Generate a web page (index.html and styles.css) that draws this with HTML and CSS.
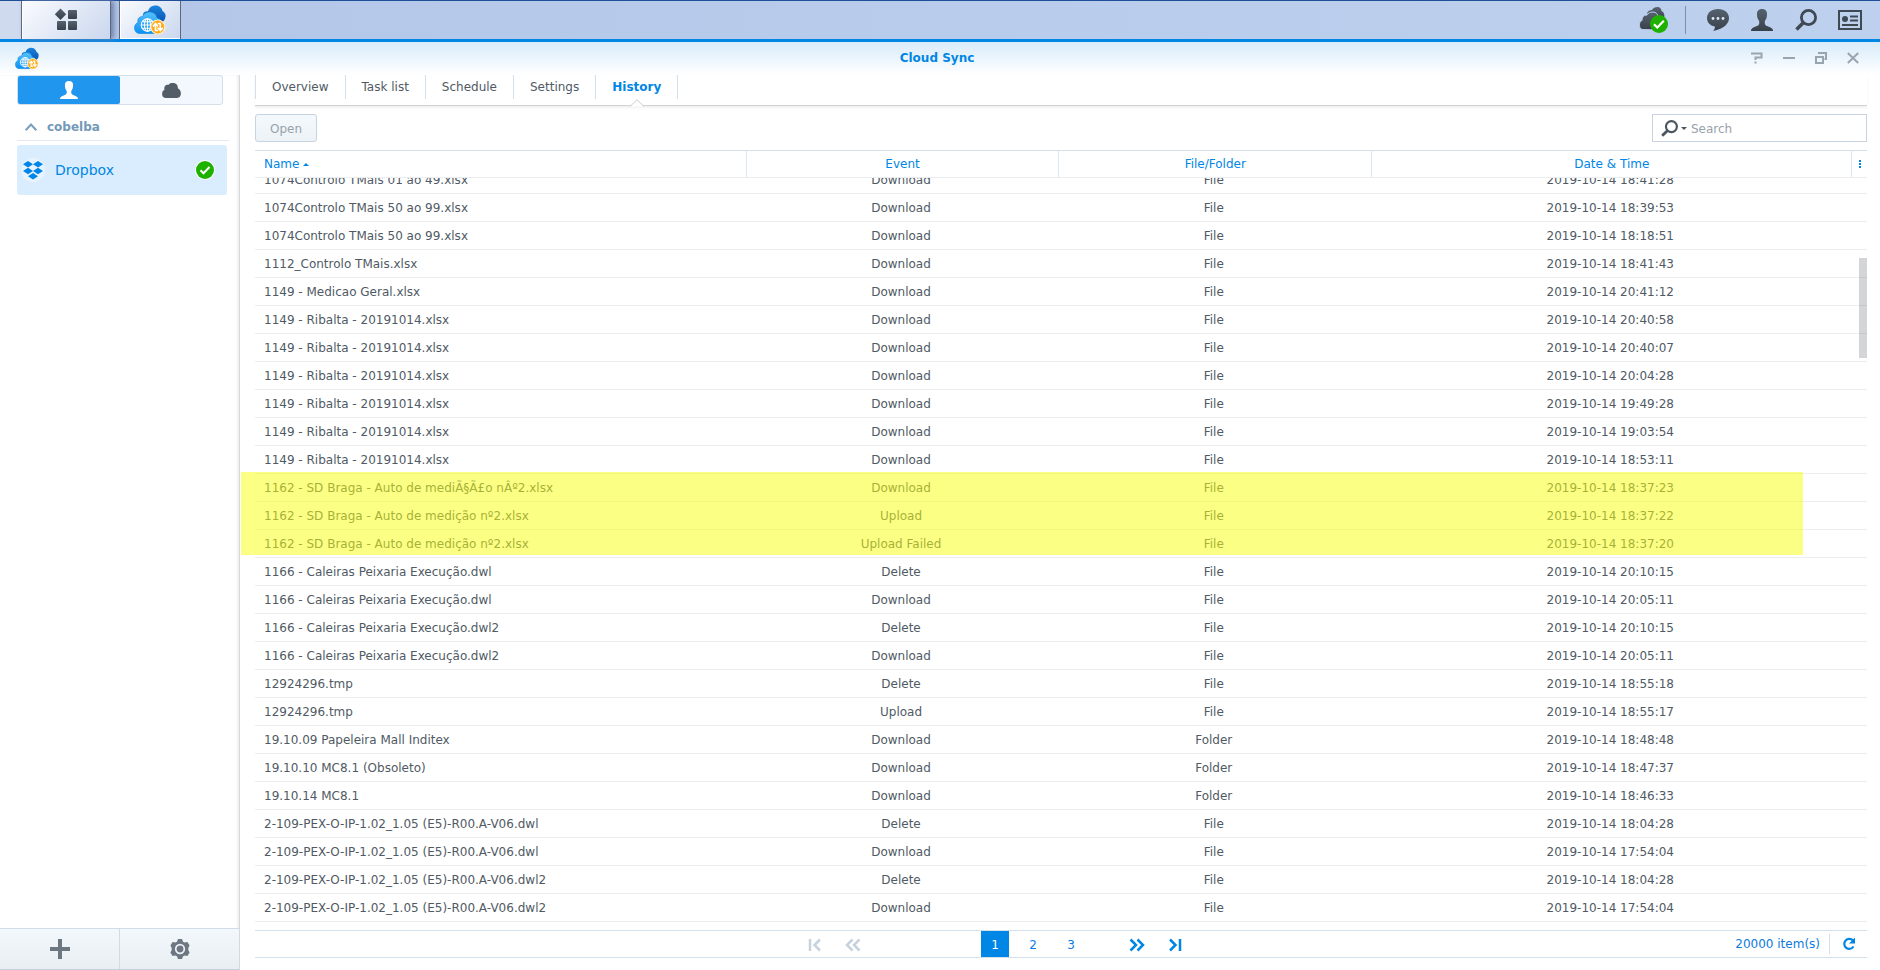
FILE: index.html
```html
<!DOCTYPE html>
<html lang="en">
<head>
<meta charset="utf-8">
<title>Cloud Sync</title>
<link rel="stylesheet" href="styles.css">
</head>
<body>
<svg class="defs" aria-hidden="true">
  <defs>
    <linearGradient id="g-back" x1="0" y1="0" x2="0" y2="1"><stop offset="0" stop-color="#1a86dd"/><stop offset="1" stop-color="#0a52b0"/></linearGradient>
    <linearGradient id="g-front" x1="0" y1="0" x2="0" y2="1"><stop offset="0" stop-color="#55c0fb"/><stop offset="1" stop-color="#0a92f5"/></linearGradient>
    <linearGradient id="g-dark" x1="0" y1="0" x2="0" y2="1"><stop offset="0" stop-color="#56626f"/><stop offset="1" stop-color="#37404a"/></linearGradient>
    <symbol id="cloudsync" viewBox="0 0 32 30">
      <path fill="url(#g-back)" d="M9 9c1-2 3-3 5-2.500C15 2.500 18 .5 21.500.5c4 0 6.500 2.500 7 5.500C31 7.500 32 9.500 31.500 12c-.3 3-2.500 5-5 5.500L12 16z"/>
      <path fill="url(#g-front)" stroke="#1182dc" stroke-width=".6" d="M5 28.500c-3-.5-4.700-3-4.500-6C.7 20 2 18.500 4 17.500c-1-3 1-6 4.500-6C9.500 8.500 12 7 15.500 7c4 0 7 2.500 7.500 6 3 .5 5 3 5 6.500 0 5-2 9-6 9z"/>
      <g fill="none" stroke="#fff" stroke-width="1.100"><circle cx="13.500" cy="20" r="6.300"/><ellipse cx="13.500" cy="20" rx="3" ry="6.300"/><path d="M13.500 13.700v12.600M7.200 20h12.600M8.200 16.800h10.600M8.200 23.200h10.600"/></g>
      <circle cx="23.800" cy="22" r="7" fill="#ffa914" stroke="#fff0c5" stroke-width="1.200"/>
      <path fill="none" stroke="#fff" stroke-width="1.700" d="M24 25.500h-2.500V19M19 21.300l2.500-2.700 2.500 2.700M23.800 18.500h2.500V25M23.800 22.800l2.500 2.700 2.500-2.700"/>
    </symbol>
    <symbol id="user" viewBox="0 0 22 22"><path d="M11 0c3.800 0 5.200 2.300 5 5.700-.1 2.800-1 4.800-2.200 6.300v3c1 2.300 4.700 2.500 7.200 4.500.8.7 1 1.600 1 2.500H0c0-.9.200-1.800 1-2.500 2.500-2 6.200-2.200 7.200-4.500v-3C7 10.500 6.100 8.500 6 5.700 5.800 2.300 7.200 0 11 0z"/></symbol>
    <symbol id="cloud" viewBox="0 0 20 16"><path d="M3.500 16C1 15.800 0 14 0 11.800 0 9.500.8 8 2.500 7.300 1.800 4 3.500 1.800 6.500 2 8 .3 9.500 0 11.500 0 14.500 0 17 2 16.800 5.500c2.200 1.300 3.200 3 3.200 5.500 0 3-1.500 5-4 5z"/></symbol>
    <symbol id="check" viewBox="0 0 18 18"><circle cx="9" cy="9" r="9" fill="#1eb100"/><path d="M4.500 9.200l3 3L13.500 6" fill="none" stroke="#fff" stroke-width="2"/></symbol>
    <symbol id="lens" viewBox="0 0 22 22"><circle cx="13.500" cy="8.500" r="7.100" fill="none" stroke="currentColor" stroke-width="2.800"/><path d="M8.500 13.500L1.500 20.500" fill="none" stroke="currentColor" stroke-width="3.600"/></symbol>
  </defs>
</svg>

<header class="taskbar">
  <div class="taskbar-edge"></div>
  <button class="task task-menu" aria-label="Main menu">
    <svg width="22" height="22" viewBox="0 0 22 22" fill="url(#g-dark)"><path d="M5.500-.5l5.700 5.700-5.700 5.700L-.2 5.200z"/><rect x="13" y="1" width="9" height="9" rx="1"/><rect x="2" y="12" width="9" height="9" rx="1"/><rect x="13" y="12" width="9" height="9" rx="1"/></svg>
  </button>
  <button class="task task-app" aria-label="Cloud Sync"><svg width="32" height="30"><use href="#cloudsync"/></svg></button>
  <div class="tray">
    <button class="tray-btn tray-status" aria-label="Sync status">
      <svg width="30" height="26" viewBox="0 0 30 26"><g fill="url(#g-dark)"><path d="M8 6c1-2 3-3 5-3 1-2 3-3 5.500-3C21 0 22 1.500 22.500 4c2.500 1 3.500 4 2.500 8l-8 3z"/><path stroke="#b9cde9" d="M3 22.500c-2-1-3-3-2.500-5.500C.8 15 1.500 14 3 13.500 3 10 4.500 8 8 8c1-2 3-3 6-3 3 0 5 2 5 5 3 1 4 3 4 7v6z"/></g><circle cx="20" cy="17" r="9" fill="#1eb100"/><path d="M15 17.200l3.300 3.300 6.500-6.800" fill="none" stroke="#fff" stroke-width="2.200"/></svg>
    </button>
    <button class="tray-btn" aria-label="Notifications"><svg width="22" height="22" viewBox="0 0 22 22"><path fill="url(#g-dark)" d="M11 0c6.500 0 11 3.800 11 9 0 5.500-4.500 10.500-16 13 1.500-1.500 2-3 1.800-4.500C3 16.500 0 13.500 0 9c0-5.200 4.500-9 11-9z"/><g fill="#dfe8f5"><circle cx="6" cy="9.500" r="1.400"/><circle cx="11" cy="9.500" r="1.400"/><circle cx="16" cy="9.500" r="1.400"/></g></svg></button>
    <button class="tray-btn" aria-label="User"><svg width="22" height="22" fill="url(#g-dark)"><use href="#user"/></svg></button>
    <button class="tray-btn" aria-label="Search"><svg width="22" height="22"><use href="#lens"/></svg></button>
    <button class="tray-btn" aria-label="Widgets"><svg width="24" height="20" viewBox="0 0 24 20"><path fill="none" stroke="currentColor" stroke-width="2" d="M1 1h22v18H1z"/><path fill="none" stroke="currentColor" stroke-width="2" d="M12 6.500h8M12 10.500h8M4 15h16"/><circle cx="7" cy="9" r="3" fill="currentColor"/></svg></button>
  </div>
</header>

<div class="window">
  <div class="titlebar">
    <svg class="title-icon" width="24" height="23"><use href="#cloudsync"/></svg>
    <h1 class="title">Cloud Sync</h1>
    <div class="controls">
      <button aria-label="Help"><svg width="12" height="12" viewBox="0 0 12 12"><path d="M0 1.500h10.500v4H4.500V8M4.500 9.500v2"/></svg></button>
      <button aria-label="Minimize"><svg width="12" height="12" viewBox="0 0 12 12"><path d="M0 6h12"/></svg></button>
      <button aria-label="Restore"><svg width="12" height="12" viewBox="0 0 12 12"><path d="M3 1h8v6H9.500M1 5h7v6H1zM0 5h9"/></svg></button>
      <button aria-label="Close"><svg width="12" height="12" viewBox="0 0 12 12"><path d="M.8 1l10.400 10M11.200 1L.8 11"/></svg></button>
    </div>
  </div>

  <div class="content">
    <aside class="sidebar">
      <div class="switch">
        <button class="switch-btn on" aria-label="By user"><svg width="18" height="18" fill="#fff"><use href="#user"/></svg></button>
        <button class="switch-btn" aria-label="By cloud"><svg width="19" height="15" fill="#525d68"><use href="#cloud"/></svg></button>
      </div>
      <button class="group"><svg width="12" height="8" viewBox="0 0 12 8"><path d="M.7 7.200L6 1.500l5.300 5.700" fill="none" stroke="#7a9fbf" stroke-width="2"/></svg>cobelba</button>
      <button class="conn">
        <svg width="24" height="24" viewBox="0 0 24 24"><circle cx="12" cy="12" r="12" fill="#e8f3fd"/><g fill="#0085e8"><path d="M7 3l5 3.200-5 3.200-5-3.200zM17 3l5 3.200-5 3.200-5-3.200zM7 9.800l5 3.200-5 3.200L2 13zM17 9.800l5 3.200-5 3.200-5-3.200zM12 15l5 3.300-5 3.200-5-3.200z"/></g></svg>
        <span class="conn-name">Dropbox</span>
        <svg width="20" height="20" viewBox="-1 -1 20 20"><circle cx="9" cy="9" r="10" fill="#fff"/><use href="#check" width="18" height="18"/></svg>
      </button>
      <div class="side-tools">
        <button aria-label="Add"><svg width="20" height="20" viewBox="0 0 20 20"><path d="M10 0v20M0 10h20" stroke="#6c7782" stroke-width="4"/></svg></button>
        <button aria-label="Settings"><svg width="20" height="20" viewBox="0 0 20 20"><path fill="#6c7782" d="M8 0h4l1 2.700 1.700.9 2.700-.6 2.200 3.600L18.300 9v2l1.300 2.400-2.200 3.600-2.700-.6-1.700.9-1 2.700H8l-1-2.700-1.700-.9-2.700.6L.4 13.400 1.700 11V9L.4 6.600 2.600 3l2.700.6L7 2.700z"/><circle cx="10" cy="10" r="4.300" fill="#6c7782" stroke="#eef3f7" stroke-width="1.700"/></svg></button>
      </div>
    </aside>

    <main class="main">
      <nav class="tabs">
        <a href="#overview">Overview</a><a href="#tasks">Task list</a><a href="#schedule">Schedule</a><a href="#settings">Settings</a><a href="#history" class="active">History<svg class="notch" width="14" height="8" viewBox="0 0 14 8"><path d="M0 7.500L7 .7l7 6.800" fill="#fff" stroke="#ccc"/></svg></a>
      </nav>
      <div class="toolbar">
        <button class="open" disabled>Open</button>
        <label class="search">
          <svg width="17" height="17"><use href="#lens"/></svg>
          <svg width="6" height="3" viewBox="0 0 6 3"><path d="M0 0h6L3 3z" fill="currentColor"/></svg>
          <input type="text" placeholder="Search" aria-label="Search">
        </label>
      </div>
      <div class="grid">
        <div class="scroller" id="scroller">
          <table>
            <colgroup><col class="c-name"><col class="c-event"><col class="c-kind"><col class="c-date"><col></colgroup>
            <thead><tr><th class="name">Name <svg width="6" height="3" viewBox="0 0 6 3"><path d="M0 3h6L3 0z" fill="currentColor"/></svg></th><th>Event</th><th>File/Folder</th><th>Date &amp; Time</th><th class="more" aria-label="Columns"><svg width="2" height="8" viewBox="0 0 2 8"><path d="M1 0v8" stroke="currentColor" stroke-width="2" stroke-dasharray="2 1"/></svg></th></tr></thead>
            <tbody id="rows"></tbody>
          </table>
        </div>
        <div class="marker"></div>
        <div class="thumb"></div>
      </div>
      <footer class="pager">
        <div class="pages">
          <button disabled aria-label="First page"><svg width="12" height="12" viewBox="0 0 12 12"><path d="M1 0v12M11 .5L5.500 6l5.500 5.500"/></svg></button>
          <button disabled aria-label="Previous page"><svg width="14" height="12" viewBox="0 0 14 12"><path d="M6.500 .5L1 6l5.500 5.500M13.500 .5L8 6l5.500 5.500"/></svg></button>
          <div class="numbers"><button class="current">1</button><button>2</button><button>3</button></div>
          <button aria-label="Next page"><svg width="14" height="12" viewBox="0 0 14 12"><path d="M.5 .5L6 6 .5 11.500M7.500 .5L13 6l-5.500 5.500"/></svg></button>
          <button aria-label="Last page"><svg width="12" height="12" viewBox="0 0 12 12"><path d="M11 0v12M1 .5L6.500 6 1 11.500"/></svg></button>
        </div>
        <span class="count">20000 item(s)</span>
        <button class="refresh" aria-label="Refresh"><svg width="14" height="14" viewBox="0 0 14 14"><path d="M11 3.500A5 5 0 1 0 11.500 9.500" fill="none" stroke="currentColor" stroke-width="2.200"/><path d="M13 .5v6H7z" fill="currentColor"/></svg></button>
      </footer>
    </main>
  </div>
</div>
<script src="app.js"></script>
</body>
</html>
```
FILE: styles.css
```css
* { box-sizing: border-box; }
body {
  margin: 0;
  height: 100vh;
  display: flex;
  flex-direction: column;
  overflow: hidden;
  background: #fff;
  color: #505a64;
  font: 12px/16px Verdana, "DejaVu Sans", sans-serif;
}
button {
  display: flex;
  align-items: center;
  justify-content: center;
  margin: 0;
  padding: 0;
  border: 0;
  background: none;
  color: inherit;
  font: inherit;
  cursor: pointer;
}
svg { display: block; flex: none; overflow: visible; }
.defs { position: absolute; width: 0; height: 0; }

/* Taskbar */
.taskbar {
  flex: none;
  display: flex;
  height: 42px;
  border-top: 1px solid #1f4f96;
  border-bottom: 3px solid #0086e5;
  background: linear-gradient(90deg, #b4c6e8, #bdd1ee);
}
.taskbar-edge { width: 21px; background: #cfdaef; }
.task {
  border: 1px solid #5d6780;
  border-width: 0 1px;
  background: linear-gradient(135deg, #fafbfe, #cad7ee);
  box-shadow: inset 1px 0 #fff, inset 0 -1px #fff;
}
.task-menu { width: 90px; box-shadow: inset 1px 0 #fff, 3px 0 5px #7083ab; }
.task-app { width: 62px; margin-left: 8px; }
.tray { display: flex; align-items: center; margin-left: auto; padding-right: 8px; color: #3f4954; }
.tray-btn { width: 44px; height: 28px; }
.tray-status { width: 50px; margin-right: 10px; padding-right: 17px; padding-left: 4px; border-right: 1px solid #7c8eae; }

/* Window frame */
.window { flex: 1; min-height: 0; display: flex; flex-direction: column; }
.titlebar {
  flex: none;
  display: grid;
  grid-template-columns: 1fr auto 1fr;
  align-items: center;
  height: 33px;
  padding: 0 21px 1px 15px;
  background: linear-gradient(#d8ebfa, #fff);
}
.title { margin: 0; font-size: 12px; line-height: 16px; color: #0086e5; }
.controls { display: flex; justify-content: flex-end; gap: 20px; }
.controls path { fill: none; stroke: #98a5b1; stroke-width: 2; }
.content { flex: 1; min-height: 0; display: flex; }

/* Sidebar */
.sidebar {
  flex: none;
  display: flex;
  flex-direction: column;
  width: 240px;
  border-right: 1px solid #d5d9dd;
  box-shadow: inset -2px 0 2px #f0f0f0;
}
.switch { display: flex; margin: 0 16px 0 17px; height: 30px; border: 1px solid #d3dfea; border-radius: 3px; background: #f2f8fd; }
.switch-btn { flex: 1; }
.switch-btn.on { border-radius: 2px; background: #2196ef; }
.group {
  justify-content: flex-start;
  gap: 10px;
  height: 36px;
  margin: 0 10px 4px 17px;
  padding: 8px 8px 0;
  border-bottom: 1px solid #e3e9ef;
  color: #7399b9;
  font-weight: bold;
}
.conn { gap: 10px; height: 50px; margin: 0 12px 0 17px; padding: 0 12px 0 4px; border-radius: 3px; background: #d9edff; color: #0086e5; font-size: 14px; }
.conn-name { flex: 1; text-align: left; }
.side-tools { display: flex; height: 42px; margin-top: auto; border: 1px solid #d0dbe6; border-width: 1px 0; border-bottom-color: #c4cfd9; background: linear-gradient(#f3f8fd, #e9eef3); }
.side-tools button { flex: 1; }
.side-tools button + button { border-left: 1px solid #d0dbe6; }

/* Main panel */
.main { flex: 1; min-width: 0; display: flex; flex-direction: column; padding: 0 13px 12px 15px; }
.tabs { flex: none; display: flex; height: 31px; padding-bottom: 6px; border-bottom: 1px solid #d0d3d6; box-shadow: 0 2px 2px #f2f2f2; }
.tabs a { position: relative; padding: 4px 16px 0; border-left: 1px solid #d3e0ec; color: inherit; text-decoration: none; }
.tabs .active { border-right: 1px solid #d3e0ec; color: #0086e5; font-weight: bold; }
.notch { position: absolute; left: 50%; bottom: -8px; margin-left: -7px; }
.toolbar { flex: none; display: flex; justify-content: space-between; padding: 8px 0; }
.open { width: 62px; height: 28px; padding-top: 2px; border: 1px solid #c6d3e0; border-radius: 3px; background: linear-gradient(#f4f9fd, #edf2f7); color: #98a2ab; }
.search { display: flex; align-items: center; width: 215px; height: 28px; padding-left: 8px; border: 1px solid #c6d3e0; color: #4c5660; }
.search input { flex: 1; min-width: 0; border: 0; outline: 0; padding: 2px 4px 0; font: inherit; background: none; }
.search input::placeholder { color: #98a2ab; opacity: 1; }
.search svg + svg { margin-left: 3px; }

/* History grid */
.grid { position: relative; flex: 1; min-height: 0; }
.scroller { height: 100%; overflow: hidden; border-top: 1px solid #d3dfea; }
table { width: 100%; margin-bottom: 12px; table-layout: fixed; border-spacing: 0; }
.c-name { width: 30.5%; }
.c-event, .c-kind { width: 19.4%; }
.c-date { width: 29.8%; }
th, td { padding: 0; text-align: center; font-weight: normal; white-space: nowrap; border-bottom: 1px solid #ebeef0; }
th { position: sticky; top: 0; height: 27px; background: #fff; color: #0086e5; border-right: 1px solid #dce8f3; }
td { height: 28px; padding-right: 4px; }
.name, td:first-child { padding-left: 9px; text-align: left; }
.name svg, .more svg { display: inline-block; vertical-align: middle; }
.more { border-right: 0; line-height: 8px; }
.marker { position: absolute; top: 322px; left: -14px; right: 64px; height: 83px; background: rgba(247, 255, 20, .52); }
.thumb { position: absolute; top: 108px; right: 0; width: 8px; height: 100px; background: rgba(80, 86, 92, .25); }

/* Pager */
.pager { flex: none; display: flex; align-items: center; height: 28px; border: 1px solid #d3dfea; border-width: 1px 0; color: #0a7bdc; }
.pages { flex: 1; display: flex; justify-content: center; gap: 10px; }
.pages button { width: 28px; height: 26px; padding-top: 2px; }
.pages path { fill: none; stroke: #0086e5; stroke-width: 2.500; }
.pages button:disabled path { stroke: #c6d3df; }
.numbers { display: flex; gap: 10px; width: 236px; padding-left: 104px; }
.numbers .current { background: #0086e5; color: #fff; }
.count { padding-right: 9px; }
.refresh { width: 38px; height: 20px; border-left: 1px solid #d3dfea; color: #0086e5; }
```
FILE: app.js
```js
const data = `1074Controlo TMais 01 ao 49.xlsx|Download|File|18:41:28
1074Controlo TMais 50 ao 99.xlsx|Download|File|18:39:53
1074Controlo TMais 50 ao 99.xlsx|Download|File|18:18:51
1112_Controlo TMais.xlsx|Download|File|18:41:43
1149 - Medicao Geral.xlsx|Download|File|20:41:12
1149 - Ribalta - 20191014.xlsx|Download|File|20:40:58
1149 - Ribalta - 20191014.xlsx|Download|File|20:40:07
1149 - Ribalta - 20191014.xlsx|Download|File|20:04:28
1149 - Ribalta - 20191014.xlsx|Download|File|19:49:28
1149 - Ribalta - 20191014.xlsx|Download|File|19:03:54
1149 - Ribalta - 20191014.xlsx|Download|File|18:53:11
1162 - SD Braga - Auto de mediÃ§Ã£o nÂº2.xlsx|Download|File|18:37:23
1162 - SD Braga - Auto de medição nº2.xlsx|Upload|File|18:37:22
1162 - SD Braga - Auto de medição nº2.xlsx|Upload Failed|File|18:37:20
1166 - Caleiras Peixaria Execução.dwl|Delete|File|20:10:15
1166 - Caleiras Peixaria Execução.dwl|Download|File|20:05:11
1166 - Caleiras Peixaria Execução.dwl2|Delete|File|20:10:15
1166 - Caleiras Peixaria Execução.dwl2|Download|File|20:05:11
12924296.tmp|Delete|File|18:55:18
12924296.tmp|Upload|File|18:55:17
19.10.09 Papeleira Mall Inditex|Download|Folder|18:48:48
19.10.10 MC8.1 (Obsoleto)|Download|Folder|18:47:37
19.10.14 MC8.1|Download|Folder|18:46:33
2-109-PEX-O-IP-1.02_1.05 (E5)-R00.A-V06.dwl|Delete|File|18:04:28
2-109-PEX-O-IP-1.02_1.05 (E5)-R00.A-V06.dwl|Download|File|17:54:04
2-109-PEX-O-IP-1.02_1.05 (E5)-R00.A-V06.dwl2|Delete|File|18:04:28
2-109-PEX-O-IP-1.02_1.05 (E5)-R00.A-V06.dwl2|Download|File|17:54:04`;

const body = document.getElementById('rows');
for (const line of data.split('\n')) {
  const [name, event, kind, time] = line.split('|');
  const row = body.insertRow();
  for (const text of [name, event, kind, '2019-10-14 ' + time, '']) {
    row.insertCell().textContent = text;
  }
}
document.getElementById('scroller').scrollTop = 12;
```
